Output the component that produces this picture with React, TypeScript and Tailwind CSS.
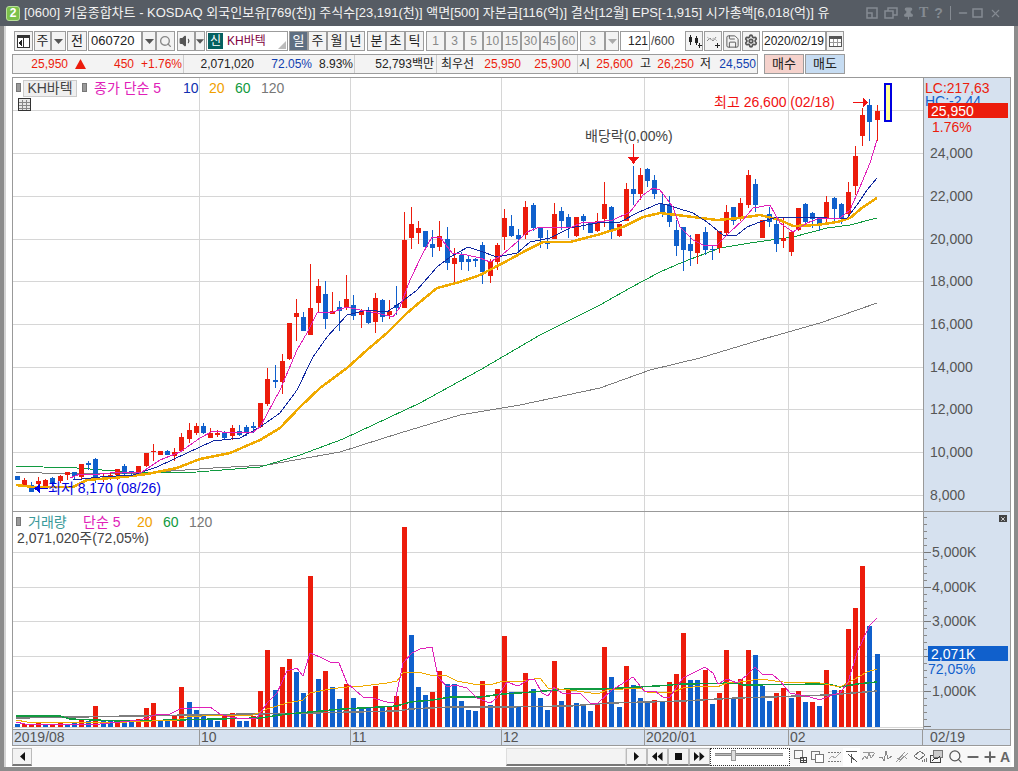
import { ReactNode } from "react";
import { ChevronDown, Search, Settings, Save, Pin, Minus, Plus, X, Volume1 } from "lucide-react";

// [bodyTop, bodyBottom, wickTop, wickBottom, red]
const candles: number[][] = [
  [476, 480, 476, 480, 0], [480, 485, 478, 487, 1], [485, 492, 482, 492, 0], [481, 484, 477, 488, 1], [480, 486, 479, 487, 1],
  [478, 483, 477, 485, 0], [476, 481, 475, 483, 1], [472, 475, 472, 480, 1], [472, 476, 472, 480, 0], [464, 477, 464, 480, 1],
  [463, 465, 461, 470, 0], [459, 480, 458, 483, 0], [476, 477, 473, 482, 1], [475, 477, 473, 480, 1], [469, 475, 469, 480, 1],
  [466, 474, 464, 475, 0], [471, 473, 471, 477, 0], [466, 473, 466, 474, 1], [453, 466, 453, 467, 1], [451, 452, 444, 461, 1],
  [451, 455, 451, 455, 1], [451, 455, 450, 455, 0], [452, 456, 448, 461, 1], [437, 451, 433, 452, 1], [430, 439, 423, 443, 1],
  [426, 433, 423, 435, 1], [426, 433, 423, 434, 0], [433, 438, 428, 438, 1], [433, 435, 430, 437, 1], [433, 438, 431, 439, 0],
  [428, 436, 425, 440, 1], [431, 435, 425, 436, 0], [427, 433, 425, 436, 0], [426, 428, 422, 433, 0], [403, 427, 403, 428, 1],
  [379, 404, 368, 406, 1], [380, 382, 365, 388, 0], [361, 382, 354, 394, 1], [323, 359, 323, 360, 1], [313, 317, 299, 341, 1],
  [317, 331, 312, 331, 0], [308, 335, 264, 335, 1], [286, 303, 279, 313, 1], [294, 319, 281, 329, 0], [311, 314, 292, 314, 1],
  [307, 311, 301, 331, 0], [299, 307, 275, 310, 1], [305, 316, 295, 320, 0], [311, 315, 309, 328, 1], [311, 323, 307, 324, 0],
  [298, 322, 293, 333, 1], [300, 317, 299, 322, 0], [311, 315, 300, 319, 1], [305, 308, 286, 315, 0], [240, 308, 212, 308, 1],
  [224, 238, 207, 249, 1], [228, 233, 221, 244, 1], [231, 247, 231, 247, 0], [244, 248, 230, 257, 0], [236, 247, 221, 251, 1],
  [239, 263, 227, 270, 0], [258, 264, 248, 282, 1], [255, 262, 252, 270, 0], [259, 262, 255, 271, 0], [259, 261, 258, 267, 0],
  [245, 272, 242, 284, 0], [261, 276, 259, 283, 1], [245, 262, 243, 270, 1], [218, 237, 209, 250, 1], [226, 236, 215, 237, 0],
  [235, 239, 229, 254, 0], [207, 235, 201, 239, 1], [205, 228, 203, 231, 0], [227, 238, 227, 248, 0], [242, 244, 230, 249, 0],
  [214, 239, 203, 239, 1], [211, 221, 207, 230, 0], [217, 228, 214, 238, 0], [217, 236, 217, 237, 1], [216, 221, 214, 230, 0],
  [223, 233, 222, 233, 0], [221, 231, 213, 232, 1], [204, 219, 182, 227, 1], [207, 230, 206, 239, 0], [224, 236, 224, 237, 1],
  [189, 221, 183, 221, 1], [189, 194, 166, 205, 0], [175, 194, 168, 200, 1], [169, 181, 168, 187, 0], [180, 194, 175, 199, 0],
  [204, 213, 193, 217, 0], [204, 222, 196, 227, 0], [230, 246, 220, 256, 0], [227, 250, 227, 271, 0], [244, 251, 235, 266, 0],
  [234, 253, 234, 264, 1], [232, 250, 227, 255, 0], [249, 250, 245, 260, 0], [231, 248, 231, 253, 1], [212, 233, 205, 235, 1],
  [207, 221, 207, 225, 0], [203, 217, 198, 221, 1], [175, 205, 170, 208, 1], [184, 205, 179, 212, 0], [220, 238, 220, 238, 1],
  [214, 222, 207, 227, 0], [224, 244, 220, 252, 0], [238, 241, 217, 248, 1], [232, 252, 230, 256, 1], [208, 230, 208, 231, 1],
  [204, 222, 203, 224, 0], [213, 219, 212, 228, 0], [218, 225, 217, 231, 0], [202, 218, 196, 222, 1], [198, 209, 197, 222, 0],
  [204, 219, 203, 224, 0], [192, 214, 182, 218, 1], [156, 186, 146, 195, 1], [115, 136, 108, 146, 1], [105, 122, 99, 141, 0],
  [111, 120, 105, 141, 1],
];

// bar top y: positive red, negative blue
const volumes: number[] = [
  -724, 724, 724, 722, -724, 724, 722, -724, -723, 720, -721, 706, -721, -721, 720, -721, -722, 719, 708, 703,
  -720, -720, 716, 687, -702, -710, -714, -718, -721, 716, 713, -721, -721, 716, 691, 650, -690, 667, 659, -672,
  -693, 576, -679, 671, -687, -699, 684, -698, -707, -707, 686, -706, 707, 696, 527, -635, -687, -695, 692, 671,
  -684, -684, -701, -710, -711, 681, -705, 689, 636, -692, -707, 673, -689, -698, -710, 661, -701, 689, -703, -706,
  -711, 703, 647, -677, -707, 666, -685, -698, -702, 700, -702, 682, 674, 633, -680, -680, 670, -704, 693, 650,
  -699, 679, 650, -655, -686, -701, 693, 688, -698, 691, -702, 702, -706, 670, -690, 690, 629, 608, 566, -626, -654,
];

const ma5 = "70,478 80,474 100,474 120,472 142,472 160,460 180,452 200,438 213,431 230,433 253,432 260,427 280,390 297,350 307,333 317,313 333,312 347,307 360,310 377,313 393,317 400,307 410,280 423,253 432,237 440,237 452,253 467,255 480,258 490,262 502,255 517,242 527,232 540,227 555,227 570,228 583,222 597,222 613,220 630,212 643,195 653,188 660,190 673,207 680,227 693,240 703,245 717,245 730,232 743,220 753,208 770,205 780,223 793,232 807,223 820,218 840,218 850,210 860,187 870,163 877,140";
const ma10 = "73,480 100,477 133,475 157,467 187,453 213,441 240,438 260,427 280,413 297,390 313,357 327,337 347,315 367,310 387,312 400,303 417,290 437,267 450,257 468,247 483,252 497,257 517,253 530,242 550,238 570,228 597,223 620,222 637,213 660,203 677,208 693,213 707,222 723,235 737,235 747,227 760,222 777,217 807,217 827,218 847,218 857,205 867,190 877,178";
const ma20 = "16,485 33,487 73,487 87,480 123,477 147,474 177,468 200,459 230,453 260,440 280,428 300,407 320,388 347,368 367,350 387,333 407,313 420,302 437,288 460,282 480,275 503,263 527,250 543,242 570,242 597,235 623,227 643,217 660,213 693,217 717,220 740,218 760,215 780,220 793,226 817,225 837,222 850,218 863,207 877,198";
const ma60 = "16,466 43,467 77,468 140,473 197,472 260,467 300,455 343,439 420,403 480,370 540,335 600,305 630,288 660,272 683,262 720,248 750,243 793,237 827,228 850,225 877,218";
const ma120 = "16,472 67,474 143,473 213,468 267,465 340,452 400,433 460,415 520,405 600,388 650,370 700,358 760,340 820,323 877,303";

const vol5 = "16,722 25,724 100,724 140,720 150,717 157,714 170,714 180,709 192,708 210,707 220,714 230,717 243,719 257,718 267,703 277,693 287,671 297,668 303,676 310,653 320,657 330,662 339,663 347,683 363,697 373,698 390,703 395,702 403,663 412,653 420,649 432,647 438,677 447,687 455,685 467,688 477,698 490,703 497,698 507,682 518,686 530,679 535,680 542,693 548,696 554,687 562,693 580,693 590,703 598,703 612,690 633,677 645,692 655,691 663,697 670,697 683,678 705,667 713,673 718,684 727,679 737,683 747,675 755,667 762,674 772,674 780,681 790,693 810,697 820,700 832,695 840,693 848,682 858,650 870,625 877,618";
const vol20 = "16,720 27,722 103,722 127,722 177,720 187,717 217,715 253,715 267,709 287,703 303,700 310,693 330,689 347,687 363,686 387,683 397,681 403,673 418,672 430,675 447,676 457,681 473,684 490,685 503,681 523,681 540,678 548,688 570,690 598,694 607,690 640,688 647,692 673,692 683,688 703,686 717,687 727,683 740,682 760,679 783,682 820,683 840,687 853,680 867,672 877,669";
const vol60 = "16,716 60,716 70,719 120,721 177,720 217,719 260,718 287,714 310,712 343,709 380,707 397,706 410,702 433,700 450,697 480,697 503,694 533,692 567,689 600,689 620,688 657,686 683,684 737,683 743,685 827,684 840,687 857,684 877,682";
const vol120 = "16,718 310,713 397,711 410,709 450,707 500,707 570,706 610,703 683,701 737,698 770,697 827,695 853,693 877,691";

const priceGrid = [110, 153, 196, 239, 281, 324, 367, 409, 452, 495];
const volGrid = [552, 587, 621, 656, 691];
const vGrid = [199, 350, 501, 644, 788];
const priceLabels = ["24,000", "22,000", "20,000", "18,000", "16,000", "14,000", "12,000", "10,000", "8,000"];
const volLabels = ["5,000K", "4,000K", "3,000K", "", "1,000K"];

const candleX = (i: number) => Math.round(16.5 + i * 7.167);

const Btn = ({ className, children }: { className: string; children?: ReactNode }) => (
  <div className={`h-5 shrink-0 flex items-center justify-center border border-[#9c9c9c] bg-[#f3f3f3] text-[13px] text-[#222] ${className}`}>
    {children}
  </div>
);

const Arrow = () => <ChevronDown size={11} strokeWidth={0} fill="#555" />;

const Caret = () => (
  <svg width="9" height="5" viewBox="0 0 9 5"><path d="M0 0h9L4.500 5z" fill="#555" /></svg>
);

const Price = () => (
  <div className="relative h-[433px] flex">
    <div className="relative w-[910px] bg-white">
      <svg className="block" width="910" height="433" viewBox="13 78 910 433" shapeRendering="crispEdges">
        {priceGrid.map((y) => <line key={y} x1="13" x2="923" y1={y + 0.5} y2={y + 0.5} stroke="#d6d6d6" />)}
        {vGrid.map((x) => <line key={x} x1={x + 0.5} x2={x + 0.5} y1="78" y2="511" stroke="#d6d6d6" />)}
        <polyline points={ma120} fill="none" stroke="#7d7d7d" strokeWidth="1" />
        <polyline points={ma60} fill="none" stroke="#109a40" strokeWidth="1" />
        {candles.map((c, i) => {
          const x = candleX(i);
          const color = c[4] ? "#ec1c0c" : "#1060cc";
          return (
            <g key={i}>
              <rect x={x} y={c[2]} width="1" height={c[3] - c[2]} fill={color} />
              <rect x={x - 2} y={c[0]} width="5" height={Math.max(c[1] - c[0], 1)} fill={color} />
            </g>
          );
        })}
        <polyline points={ma20} fill="none" stroke="#f0aa00" strokeWidth="2.500" />
        <polyline points={ma10} fill="none" stroke="#1028a0" strokeWidth="1" />
        <polyline points={ma5} fill="none" stroke="#e020b8" strokeWidth="1" />
        <rect x="885" y="84" width="6" height="37" fill="#ffff99" stroke="#0000e0" strokeWidth="2" />
        <path d="M853 102h10v-4l5 4.500-5 4.500v-4h-10z" fill="#f01010" />
        <path d="M633 144h1v13h5l-5.500 7-5.500-7h5z" fill="#f01010" />
        <path d="M48 488h-8v-4l-6 4.500 6 4.500v-4h8z" fill="#0000e0" />
      </svg>
      <div className="absolute left-[3px] top-[5px] w-[5px] h-[9px] bg-[#999] border border-[#777]" />
      <div className="absolute left-[10px] top-[2px] w-[54px] h-[17px] bg-[#efefef] border border-[#ccc] text-[14px] leading-[15px] text-[#444] text-center">KH바텍</div>
      <div className="absolute left-[69px] top-[5px] w-[5px] h-[9px] bg-[#999] border border-[#777]" />
      <div className="absolute left-[81px] top-[2px] flex text-[14px] leading-[17px] whitespace-nowrap">
        <span className="text-[#e020b8] w-[89px]">종가 단순 5</span>
        <span className="text-[#1030b0] w-[26px]">10</span>
        <span className="text-[#f0a000] w-[26px]">20</span>
        <span className="text-[#109a40] w-[26px]">60</span>
        <span className="text-[#777]">120</span>
      </div>
      <svg className="absolute left-[5px] top-[20px]" width="13" height="13" viewBox="0 0 13 13" shapeRendering="crispEdges">
        <rect x="0.500" y="0.500" width="12" height="12" fill="#e8e8e8" stroke="#333" />
        <path d="M1 4.500h11M1 7.500h11M1 10.500h11M4.500 2v10M8.500 2v10" stroke="#888" />
      </svg>
      <span className="absolute left-[701px] top-[15px] text-[14px] leading-[18px] text-[#f01010] whitespace-nowrap">최고 26,600 (02/18)</span>
      <span className="absolute left-[572px] top-[49px] text-[14px] leading-[18px] text-[#444] whitespace-nowrap">배당락(0,00%)</span>
      <span className="absolute left-[35px] top-[401px] text-[14px] leading-[18px] text-[#0000e0] whitespace-nowrap">최저 8,170 (08/26)</span>
    </div>
    <div className="relative flex-1 border-l border-[#999] bg-[#d6e1ef] overflow-hidden text-[14px] leading-[16px] text-[#555]">
      <span className="absolute left-[1px] top-[2px] text-[#ec1c0c]">LC:217,63</span>
      <span className="absolute left-[1px] top-[15px] text-[#1060cc]">HC:-2.44</span>
      <div className="absolute left-[4px] top-[25px] w-[80px] h-[15px] bg-[#ec1c0c] text-white pl-[3px] leading-[16px]">25,950</div>
      <span className="absolute left-[8px] top-[41px] text-[#ec1c0c]">1.76%</span>
      {priceLabels.map((t, i) => (
        <span key={t} className="absolute left-[6px]" style={{ top: priceGrid[i + 1] - 78 - 8 }}>{t}</span>
      ))}
    </div>
  </div>
);

const Volume = () => (
  <div className="h-[217px] flex">
    <div className="relative w-[910px] bg-white">
      <svg className="block" width="910" height="217" viewBox="13 512 910 217" shapeRendering="crispEdges">
        {volGrid.map((y) => <line key={y} x1="13" x2="923" y1={y + 0.5} y2={y + 0.5} stroke="#d6d6d6" />)}
        {vGrid.map((x) => <line key={x} x1={x + 0.5} x2={x + 0.5} y1="512" y2="729" stroke="#d6d6d6" />)}
        <line x1="13" x2="923" y1="727.500" y2="727.500" stroke="#d6d6d6" />
        {volumes.map((v, i) => {
          const top = Math.abs(v);
          return <rect key={i} x={candleX(i) - 2} y={top} width="5" height={727 - top} fill={v > 0 ? "#ec1c0c" : "#1060cc"} />;
        })}
        <polyline points={vol120} fill="none" stroke="#7d7d7d" strokeWidth="1.500" />
        <polyline points={vol60} fill="none" stroke="#109a40" strokeWidth="1.500" />
        <polyline points={vol20} fill="none" stroke="#f0aa00" strokeWidth="1" />
        <polyline points={vol5} fill="none" stroke="#e020b8" strokeWidth="1" />
      </svg>
      <div className="absolute left-[3px] top-[5px] w-[5px] h-[9px] bg-[#999] border border-[#777]" />
      <div className="absolute left-[15px] top-[2px] flex text-[14px] leading-[17px] whitespace-nowrap">
        <span className="text-[#3a9a9a] w-[55px]">거래량</span>
        <span className="text-[#e020b8] w-[54px]">단순 5</span>
        <span className="text-[#f0a000] w-[26px]">20</span>
        <span className="text-[#109a40] w-[26px]">60</span>
        <span className="text-[#777]">120</span>
      </div>
      <span className="absolute left-[4px] top-[18px] text-[14px] leading-[17px] text-[#444] whitespace-nowrap">2,071,020주(72,05%)</span>
    </div>
    <div className="relative flex-1 border-l border-[#999] bg-[#d6e1ef] overflow-hidden text-[14px] leading-[16px] text-[#555]">
      <svg className="absolute left-0 top-0" width="8" height="217" viewBox="0 512 8 217" shapeRendering="crispEdges">
        {[517, 524, 531, 538, 545, 559, 566, 573, 580, 594, 601, 608, 615, 628, 635, 642, 649, 663, 670, 677, 684, 698, 705, 712, 719].map((y) => (
          <line key={y} x1="0" x2="3" y1={y + 0.5} y2={y + 0.5} stroke="#888" />
        ))}
        {volGrid.map((y) => <line key={y} x1="0" x2="7" y1={y + 0.5} y2={y + 0.5} stroke="#777" />)}
        <line x1="0" x2="7" y1="726.500" y2="726.500" stroke="#777" />
      </svg>
      <div className="absolute right-[3px] top-[3px] w-[8px] h-[7px] bg-[#444] flex items-center justify-center">
        <X size={6} color="#fff" strokeWidth={3} />
      </div>
      {volLabels.map((t, i) => t && (
        <span key={t} className="absolute left-[8px]" style={{ top: volGrid[i] - 512 - 8 }}>{t}</span>
      ))}
      <div className="absolute left-[4px] top-[134px] w-[80px] h-[15px] bg-[#1060cc] text-white pl-[3px] leading-[16px]">2,071K</div>
      <span className="absolute left-[4px] top-[149px] text-[#1060cc]">72,05%</span>
    </div>
  </div>
);

const TimeAxis = () => (
  <div className="h-[16px] flex border-t border-[#999] bg-[#d6e1ef] text-[14px] leading-[15px] text-[#555]">
    <div className="w-[187px] pl-[1px] border-r border-[#999]">2019/08</div>
    <div className="w-[151px] pl-[1px] border-r border-[#999]">10</div>
    <div className="w-[151px] pl-[1px] border-r border-[#999]">11</div>
    <div className="w-[143px] pl-[1px] border-r border-[#999]">12</div>
    <div className="w-[144px] pl-[1px] border-r border-[#999]">2020/01</div>
    <div className="w-[134px] pl-[1px] border-r border-[#999]">02</div>
    <div className="flex-1 pl-[7px]">02/19</div>
  </div>
);

const Play = ({ d }: { d: string }) => (
  <div className="w-[21px] h-[18px] shrink-0 flex items-center justify-center bg-[#f3f3f3] border border-[#bbb] border-b-2 border-b-[#777]">
    <svg width="11" height="9" viewBox="0 0 11 9"><path d={d} fill="#111" /></svg>
  </div>
);

const ToolIcon = ({ active, children }: { active?: boolean; children: ReactNode }) => (
  <div className={`w-[17px] h-[18px] shrink-0 flex items-center justify-center ${active ? "bg-white" : ""}`}>
    <svg width="15" height="15" viewBox="0 0 15 15" fill="none" stroke="#777" shapeRendering="crispEdges">{children}</svg>
  </div>
);

const BottomBar = () => (
  <div className="h-[19px] mt-[1px] flex items-center bg-[#f7f7f7]">
    <div className="w-[20px] h-[18px] shrink-0 flex items-center justify-center bg-[#f3f3f3] border border-[#bbb] border-b-2 border-b-[#777]">
      <svg width="5" height="9" viewBox="0 0 5 9"><path d="M5 0v9L0 4.500z" fill="#111" /></svg>
    </div>
    <div className="w-[474px] h-[18px] shrink-0 bg-[#fbfbfb]" />
    <div className="w-[120px] h-[18px] shrink-0 bg-[#f3f3f3] border border-[#ddd] border-b-2 border-b-[#777]" />
    <Play d="M3 0v9l5-4.500z" />
    <Play d="M5 0v9L0 4.500zM10.500 0v9l-5-4.500z" />
    <Play d="M2 1h7v7H2z" />
    <Play d="M0 0v9l5-4.500zM5.500 0v9l5-4.500z" />
    <div className="relative w-[80px] h-[18px] shrink-0 border border-dotted border-[#333] bg-white">
      <div className="absolute left-[4px] right-[6px] top-[4px] h-[3px] bg-[#bbb] border-y border-[#888]" />
      <div className="absolute left-[20px] top-[1px] w-[5px] h-[11px] bg-[#ddd] border border-[#999]" />
    </div>
    <div className="flex-1 flex items-center pl-[2px]">
      <ToolIcon><rect x="1.500" y="1.500" width="8" height="8" /><path d="M7.500 8.500h6v5h-6zM10.500 8.500v5M7.500 11h6" stroke="#444" /></ToolIcon>
      <ToolIcon><rect x="1.500" y="2.500" width="8" height="8" /><rect x="5.500" y="5.500" width="8" height="8" fill="#fff" /></ToolIcon>
      <ToolIcon><path d="M1 3h13M1 12h13" strokeDasharray="2 1" /><path d="M2 10l3-3 3 2 5-5" stroke="#aaa" /></ToolIcon>
      <ToolIcon active><path d="M2 2.500h11M7.500 5v9M4 5l9 8" stroke="#555" /></ToolIcon>
      <ToolIcon><path d="M1 11l3-4 2 3 2-6 2 5 4-5M2 3h11" stroke="#999" /></ToolIcon>
      <ToolIcon><path d="M1 9l3-1 2 4 2-10 2 8 4-3" stroke="#888" /></ToolIcon>
      <ToolIcon><path d="M1 13L10 3M4 13L13 4M2 9l4 2 3-4 3 3" stroke="#999" /></ToolIcon>
      <ToolIcon><path d="M2 7l6-5 5 4-6 5zM10 13v-2M12 13v-3M14 13V9" /></ToolIcon>
      <ToolIcon><rect x="1.500" y="6.500" width="10" height="7" stroke="#444" /><rect x="4.500" y="1.500" width="9" height="7" fill="#ccc" /><path d="M3 12l3-3 2 1 3-3" stroke="#333" /></ToolIcon>
      <Search size={15} color="#555" className="ml-[3px] shrink-0" />
      <Minus size={16} color="#666" strokeWidth={3} className="ml-[2px] shrink-0" />
      <Plus size={16} color="#666" strokeWidth={3} className="ml-[1px] shrink-0" />
      <span className="ml-[2px] text-[14px] leading-none font-bold text-[#666]">A</span>
    </div>
  </div>
);

const Num = ({ className, children }: { className: string; children: ReactNode }) => (
  <span className={`shrink-0 text-right whitespace-nowrap ${className}`}>{children}</span>
);

const InfoRow = () => (
  <div className="mt-[3px] h-5 flex text-[12px] leading-[18px]">
    <div className="w-[746px] flex border border-[#9c9c9c] bg-[#f3f3f3]">
      <div className="w-[171px] flex items-center border-r border-[#ccc] text-[#ec1c0c]">
        <Num className="w-[55px]">25,950</Num>
        <svg className="ml-[7px] shrink-0" width="11" height="10" viewBox="0 0 11 10"><path d="M5.500 0L11 10H0z" fill="#ec1c0c" /></svg>
        <Num className="w-[48px]">450</Num>
        <Num className="w-[48px]">+1.76%</Num>
      </div>
      <div className="w-[171px] flex items-center border-r border-[#ccc]">
        <Num className="w-[70px] text-[#222]">2,071,020</Num>
        <Num className="w-[58px] text-[#1040b0]">72.05%</Num>
        <Num className="w-[41px] text-[#222]">8.93%</Num>
      </div>
      <div className="w-[82px] flex items-center border-r border-[#ccc]">
        <Num className="w-[79px] text-[#222]">52,793백만</Num>
      </div>
      <div className="w-[141px] flex items-center border-r border-[#ccc]">
        <Num className="w-[37px] text-[#222]">최우선</Num>
        <Num className="w-[47px] text-[#ec1c0c]">25,950</Num>
        <Num className="w-[50px] text-[#ec1c0c]">25,900</Num>
      </div>
      <div className="flex-1 flex items-center">
        <Num className="w-[12px] text-[#222]">시</Num>
        <Num className="w-[43px] text-[#ec1c0c]">25,600</Num>
        <Num className="w-[18px] text-[#222]">고</Num>
        <Num className="w-[43px] text-[#ec1c0c]">26,250</Num>
        <Num className="w-[17px] text-[#222]">저</Num>
        <Num className="w-[45px] text-[#1040b0]">24,550</Num>
      </div>
    </div>
    <Btn className="w-[40px] ml-[6px] !bg-[#f5d2cc]">매수</Btn>
    <Btn className="w-[40px] ml-[1px] !bg-[#c6dcf2]">매도</Btn>
  </div>
);

const Toolbar = () => (
  <div className="mt-[5px] h-5 flex items-center pl-[2px]">
    <Btn className="w-[19px]">
      <svg width="13" height="13" viewBox="0 0 13 13" shapeRendering="crispEdges"><rect x="0.500" y="0.500" width="12" height="12" fill="#fff" stroke="#333" /><rect x="0" y="0" width="13" height="3" fill="#333" /><path d="M1 8l4-4v8z" fill="#222" /><rect x="6" y="3" width="1" height="10" fill="#333" /></svg>
    </Btn>
    <Btn className="w-[17px] ml-[1px]">주</Btn>
    <Btn className="w-[15px]"><Caret /></Btn>
    <Btn className="w-[20px] ml-[1px]">전</Btn>
    <Btn className="w-[54px] ml-[1px] !bg-white !justify-start pl-[2px]">060720</Btn>
    <Btn className="w-[14px]"><Caret /></Btn>
    <Btn className="w-[19px]"><Search size={13} color="#888" strokeWidth={2.500} /></Btn>
    <Btn className="w-[18px] ml-[2px]"><Volume1 size={14} color="#555" fill="#555" /></Btn>
    <Btn className="w-[10px]"><Caret /></Btn>
    <div className="relative w-[82px] h-5 ml-[1px] shrink-0 flex items-center border border-[#9c9c9c] bg-white">
      <span className="ml-[1px] w-[15px] h-[16px] bg-[#056060] text-white text-[12px] leading-[16px] text-center">신</span>
      <span className="ml-[4px] text-[12px] text-[#800040]">KH바텍</span>
      <svg className="absolute right-[1px] bottom-[1px]" width="8" height="8" viewBox="0 0 8 8"><path d="M8 0v8H0z" fill="#bbb" /></svg>
    </div>
    <Btn className="w-[19px] ml-[1px] !bg-[#5f6f82] !text-white">일</Btn>
    <Btn className="w-[19px]">주</Btn>
    <Btn className="w-[19px]">월</Btn>
    <Btn className="w-[19px]">년</Btn>
    <Btn className="w-[19px] ml-[2px]">분</Btn>
    <Btn className="w-[19px]">초</Btn>
    <Btn className="w-[19px]">틱</Btn>
    <div className="w-[2px] shrink-0" />
    {["1", "3", "5", "10", "15", "30", "45", "60"].map((t) => (
      <Btn key={t} className="w-[19px] !text-[#888] !text-[12px]">{t}</Btn>
    ))}
    <Btn className="w-[25px] ml-[2px] !text-[#888] !text-[12px]">3</Btn>
    <Btn className="w-[14px]"><svg width="9" height="5" viewBox="0 0 9 5"><path d="M0 0h9L4.500 5z" fill="#aaa" /></svg></Btn>
    <Btn className="w-[30px] ml-[1px] !bg-white !justify-end pr-[1px] !text-[12px]">121</Btn>
    <span className="w-[35px] shrink-0 pl-[1px] text-[12px] text-[#444]">/600</span>
    <Btn className="w-[18px]">
      <svg width="15" height="14" viewBox="0 0 15 14" shapeRendering="crispEdges"><path d="M2 3h3v5H2zM8 4h3v5H8zM3 1h1v10H3zM9 2h1v9H9zM11 11h1V9h1v2h2v1h-2v2h-1v-2h-1z" fill="#222" /></svg>
    </Btn>
    <Btn className="w-[18px] ml-[1px]">
      <svg width="15" height="14" viewBox="0 0 15 14" fill="none"><path d="M1 7l3-3 3 3 3-4" stroke="#888" /><path d="M1 3l4 3 3-2 3 3" stroke="#bbb" /><path d="M11 9h1v2h2v1h-2v2h-1v-2H9v-1h2z" fill="#222" /></svg>
    </Btn>
    <Btn className="w-[18px] ml-[1px]"><Save size={15} color="#555" strokeWidth={1.500} /></Btn>
    <Btn className="w-[18px] ml-[1px]"><Settings size={14} color="#555" strokeWidth={3} /></Btn>
    <Btn className="w-[64px] ml-[2px] !bg-white !text-[12px]">2020/02/19</Btn>
    <Btn className="w-[18px]">
      <svg width="13" height="11" viewBox="0 0 13 11" shapeRendering="crispEdges"><rect x="0.500" y="0.500" width="12" height="10" fill="#fff" stroke="#555" /><rect x="0" y="0" width="13" height="3" fill="#555" /><path d="M4.500 3v7M8.500 3v7M1 6.500h11" stroke="#999" /></svg>
    </Btn>
  </div>
);

const TitleBar = () => (
  <div className="h-[26px] shrink-0 flex items-center bg-[#565c64] text-[13px] text-[#f2f2f2]">
    <div className="ml-[6px] w-[14px] h-[15px] rounded-[3px] bg-[#7cc04a] border border-[#b8e09a] text-white text-[12px] leading-[13px] font-bold text-center">2</div>
    <span className="ml-[4px] w-[836px] shrink-0 whitespace-nowrap overflow-hidden">
      [0600] 키움종합차트 - KOSDAQ 외국인보유[769(천)] 주식수[23,191(천)] 액면[500] 자본금[116(억)] 결산[12월] EPS[-1,915] 시가총액[6,018(억)] 유
    </span>
    <div className="flex-1 flex items-center text-[#858b92]">
      <svg className="ml-[6px]" width="12" height="12" viewBox="0 0 12 12" fill="none" stroke="currentColor" strokeWidth="1.500"><path d="M1 1h10v10H1zM1 6h5v5" /></svg>
      <svg className="ml-[6px]" width="14" height="12" viewBox="0 0 14 12" fill="none" stroke="currentColor" strokeWidth="1.500"><path d="M4 4V1h9v7H9M1 4h8v7H1z" /></svg>
      <Pin size={13} className="ml-[4px]" fill="currentColor" />
      <span className="ml-[4px] font-bold text-[14px] leading-none font-['Liberation_Serif',serif]">T</span>
      <span className="ml-[6px] font-bold text-[14px] leading-none">?</span>
      <div className="ml-[7px] w-[1px] h-[14px] bg-[#858b92]" />
      <Minus size={12} className="ml-[6px]" strokeWidth={3} />
      <svg className="ml-[3px]" width="11" height="10" viewBox="0 0 11 10" fill="none" stroke="currentColor" strokeWidth="1.500"><path d="M1 1h9v8H1z" /></svg>
      <X size={13} className="ml-[6px]" />
    </div>
  </div>
);

export default function App() {
  return (
    <div className="w-[1018px] h-[771px] flex flex-col overflow-hidden bg-white font-['Liberation_Sans','Noto_Sans_CJK_KR',sans-serif]">
      <TitleBar />
      <div className="flex-1 flex min-h-0">
        <div className="w-[6px] bg-[#8c8c8c] border-r-2 border-[#d4d4d4]" />
        <div className="w-[1008px] pl-[6px] pr-[3px] flex flex-col">
          <Toolbar />
          <InfoRow />
          <div className="mt-[3px] border border-[#999] flex flex-col">
            <Price />
            <div className="h-[1px] bg-[#999]" />
            <Volume />
            <TimeAxis />
          </div>
          <BottomBar />
        </div>
        <div className="w-[4px] bg-[#8c8c8c]" />
      </div>
      <div className="h-[4px] shrink-0 bg-[#8c8c8c]" />
    </div>
  );
}
